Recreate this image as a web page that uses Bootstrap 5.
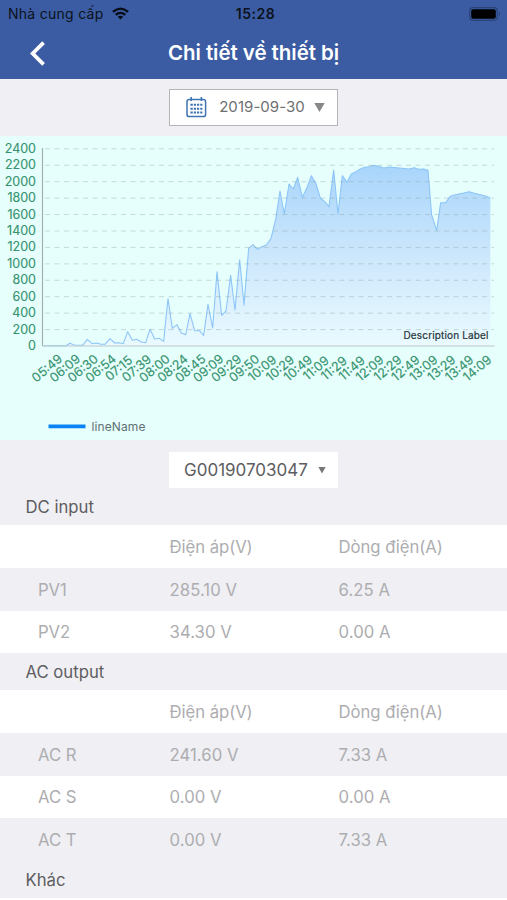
<!DOCTYPE html>
<html lang="vi">
<head>
<meta charset="utf-8">
<meta name="viewport" content="width=device-width, initial-scale=1">
<title>Chi tiết về thiết bị</title>
<link href="https://cdn.jsdelivr.net/npm/bootstrap@5.3.0/dist/css/bootstrap.min.css" rel="stylesheet">
<style>
  body { font-family: Inter, "Liberation Sans", sans-serif; background: #fff; color: #5d5d60; overflow-x: hidden; }
  svg { display: block; }
  .app-head { background: #3b5ca2; height: 79px; }
  .status { height: 27px; color: #0c1220; font-size: 14px; padding: 0 6px 0 8px; }
  .status .carrier { letter-spacing: .27px; }
  .status .clock { font-weight: 600; letter-spacing: .55px; padding-left: 2px; }
  .title-bar { height: 52px; }
  .title-bar h1 { font-size: 20.5px; font-weight: 600; letter-spacing: -.05px; }
  .back svg { margin-left: 30px; }
  .strip { background: #efeff4; }
  .date-strip { height: 57px; padding-bottom: 1px; }
  .date-btn { width: 169px; height: 37px; border: 1.5px solid #b5b5b8; background: #fff; color: #6f6f72; font-size: 15px; padding: 0 12px 0 16px; }
  .date-btn span { padding: 1px 0 0 3px; letter-spacing: .05px; }
  .serial-strip { height: 49px; padding-top: 12px; }
  .serial-btn { width: 169px; height: 36px; background: #fff; font-size: 17px; color: #5d5d60; padding: 0 12px 0 15px; }
  .serial-btn span { padding-top: 2px; }
  .chart-box { background: #e6fffd; height: 304px; }
  .sec-title { background: #efeff4; height: 36.75px; font-size: 16.7px; padding: 2px 0 0 25.5px; }
  .first-title { height: 36px; }
  .data-row { height: 42.75px; font-size: 16.7px; color: #adadb0; padding-top: 2px; }
  .data-row > .col-4 { padding-left: .6px; letter-spacing: -.06px; }
  .data-row > .col-4:first-child { padding-left: 38px; }
  .data-row > .num { letter-spacing: .04px; }
  .shade { background: #efeff4; }
</style>
<script src="https://cdn.jsdelivr.net/npm/bootstrap@5.3.0/dist/js/bootstrap.bundle.min.js"></script>
</head>
<body>
<header class="app-head">
  <div class="status row g-0 align-items-center">
    <div class="col d-flex align-items-center gap-2">
      <span class="carrier">Nhà cung cấp</span>
      <svg width="17" height="13" viewBox="0 0 17 13" fill="none" stroke="#080c16" stroke-width="2.3"><path d="M.9 4.9Q8.5-1.7 16.1 4.9M3.7 7.9Q8.5 3.8 13.3 7.9"/><path d="M5.8 9.8Q8.5 7.6 11.2 9.8L8.5 12.6Z" fill="#080c16" stroke="none"/></svg>
    </div>
    <div class="col-auto clock">15:28</div>
    <div class="col d-flex justify-content-end">
      <svg width="32" height="14" viewBox="0 0 32 14"><rect x=".7" y=".7" width="27.6" height="12.6" rx="3.5" fill="none" stroke="#2a4277" stroke-width="1.2"/><rect x="2.2" y="2.2" width="24.6" height="9.6" rx="2" fill="#000"/><path d="M30 4.8Q32.2 7 30 9.2Z" fill="#2a4277"/></svg>
    </div>
  </div>
  <div class="title-bar row g-0 align-items-center text-white">
    <div class="col back"><svg width="16" height="25" viewBox="0 0 16 25" fill="none" stroke="#fff" stroke-width="3.8"><path d="M13.6 1.7 2.7 12.5 13.6 23.3"/></svg></div>
    <h1 class="col-auto m-0">Chi tiết về thiết bị</h1>
    <div class="col"></div>
  </div>
</header>

<div class="strip date-strip d-flex justify-content-center align-items-center">
  <div class="date-btn d-flex align-items-center justify-content-between">
    <svg width="21" height="21" viewBox="0 0 21 21" fill="none" stroke="#3f74b5"><rect x="1" y="2.4" width="18.6" height="17.2" rx="2.2" stroke-width="1.5"/><path d="M5.2 0V4M15.4 0V4" stroke-width="1.6"/><path d="M4.4 7.7h2.4m1 0h2.2m1 0h2.2m1 0h2.2M4.4 11.7h2.4m1 0h2.2m1 0h2.2m1 0h2.2M4.4 15.5h2.4m1 0h2.2m1 0h2.2m1 0h2.2" stroke-width="2"/></svg>
    <span>2019-09-30</span>
    <svg width="11" height="9" viewBox="0 0 11 9"><path d="M.3 0H10.7L5.5 9Z" fill="#88888a"/></svg>
  </div>
</div>

<div class="chart-box">
  <svg id="chart" width="507" height="304" viewBox="0 0 507 304" font-family="Inter, Liberation Sans, sans-serif">
    <defs>
      <linearGradient id="area" gradientUnits="userSpaceOnUse" x1="0" y1="91" x2="0" y2="633">
        <stop offset="0" stop-color="#a9d5fb"/><stop offset=".5" stop-color="#cce7fc"/><stop offset="1" stop-color="#eafaff"/>
      </linearGradient>
    </defs>
    <g id="plot" transform="translate(0 -1) scale(.33333)"></g>
    <g id="grid" stroke="#8fa6a8" stroke-opacity=".42" stroke-width="1" stroke-dasharray="5 4.5"></g>
    <path d="M42.5 12V210" stroke="#a3aeb0" stroke-width="1.2"/>
    <path d="M42 210H494.500" stroke="#bcc8ca" stroke-width="1.1"/>
    <g id="ylabels" fill="#37936f" stroke="#37936f" stroke-width=".15" font-size="12.5" text-anchor="end"></g>
    <g id="xlabels" fill="#37936f" stroke="#37936f" stroke-width=".15" font-size="12.6" text-anchor="middle"></g>
    <text x="403.500" y="202.500" font-size="10" fill="#26343a" stroke="#26343a" stroke-width=".2" textLength="85">Description Label</text>
    <path d="M48.500 290.300H85.500" stroke="#0a84f5" stroke-width="3.8"/>
    <text x="91.500" y="294.500" font-size="12" fill="#617173" textLength="54">lineName</text>
  </svg>
</div>

<div class="strip serial-strip d-flex justify-content-center">
  <div class="serial-btn d-flex align-items-center justify-content-between">
    <span>G00190703047</span>
    <svg width="8" height="7" viewBox="0 0 8 7"><path d="M.4 0H7.600L4 6.600Z" fill="#777779"/></svg>
  </div>
</div>

<main>
  <div class="sec-title first-title d-flex align-items-center">DC input</div>
  <div class="data-row row g-0 align-items-center"><div class="col-4"></div><div class="col-4">Điện áp(V)</div><div class="col-4">Dòng điện(A)</div></div>
  <div class="data-row row g-0 align-items-center shade"><div class="col-4">PV1</div><div class="col-4 num">285.10 V</div><div class="col-4 num">6.25 A</div></div>
  <div class="data-row row g-0 align-items-center"><div class="col-4">PV2</div><div class="col-4 num">34.30 V</div><div class="col-4 num">0.00 A</div></div>
  <div class="sec-title d-flex align-items-center">AC output</div>
  <div class="data-row row g-0 align-items-center"><div class="col-4"></div><div class="col-4">Điện áp(V)</div><div class="col-4">Dòng điện(A)</div></div>
  <div class="data-row row g-0 align-items-center shade"><div class="col-4">AC R</div><div class="col-4 num">241.60 V</div><div class="col-4 num">7.33 A</div></div>
  <div class="data-row row g-0 align-items-center"><div class="col-4">AC S</div><div class="col-4 num">0.00 V</div><div class="col-4 num">0.00 A</div></div>
  <div class="data-row row g-0 align-items-center shade"><div class="col-4">AC T</div><div class="col-4 num">0.00 V</div><div class="col-4 num">7.33 A</div></div>
  <div class="sec-title d-flex align-items-center">Khác</div>
</main>

<script>
  const line = "130,632 198,632 210,625 222,630 248,631 262,613 276,626 290,624 303,628 315,628 330,611 344,624 357,623 370,626 383,590 397,616 410,613 424,621 437,623 450,583 464,612 478,610 491,619 504,491 517,580 531,569 544,594 557,599 570,536 584,587 598,587 611,601 624,508 638,579 651,410 665,541 678,528 692,421 705,525 719,374 732,510 746,340 759,329 772,343 786,335 799,330 813,310 827,253 840,168 853,237 867,147 880,162 893,127 907,187 920,160 934,122 947,144 961,189 974,200 987,215 1001,105 1014,237 1027,122 1041,142 1054,117 1068,110 1081,102 1094,97 1108,95 1122,91 1135,94 1151,99 1171,96 1189,98 1206,100 1226,102 1243,98 1256,103 1271,102 1284,106 1295,240 1310,286 1322,203 1337,203 1351,184 1366,179 1391,174 1407,170 1421,174 1441,179 1456,183 1471,189";
  document.getElementById("plot").innerHTML =
    `<polygon points="${line} 1471,633 130,633" fill="url(#area)"/><polyline points="${line}" fill="none" stroke="#8cc4f8" stroke-width="3.2" stroke-linejoin="round"/>`;

  let grid = "", ys = "", xs = "";
  for (let i = 0; i <= 12; i++) {
    const y = 210 - i * 16.430;
    if (i) grid += `<path d="M45 ${y}H494"/>`;
    ys += `<text x="36" y="${y + 4}">${i * 200}</text>`;
  }
  const times = "05:49 06:09 06:30 06:54 07:15 07:39 08:00 08:24 08:45 09:09 09:29 09:50 10:09 10:29 10:49 11:09 11:29 11:49 12:09 12:29 12:49 13:09 13:29 13:49 14:09".split(" ");
  times.forEach((t, i) => {
    xs += `<text transform="translate(${47 + i * 17.930} 232.300) rotate(-40)" y="4.300">${t}</text>`;
  });
  document.getElementById("grid").innerHTML = grid;
  document.getElementById("ylabels").innerHTML = ys;
  document.getElementById("xlabels").innerHTML = xs;
</script>
</body>
</html>
